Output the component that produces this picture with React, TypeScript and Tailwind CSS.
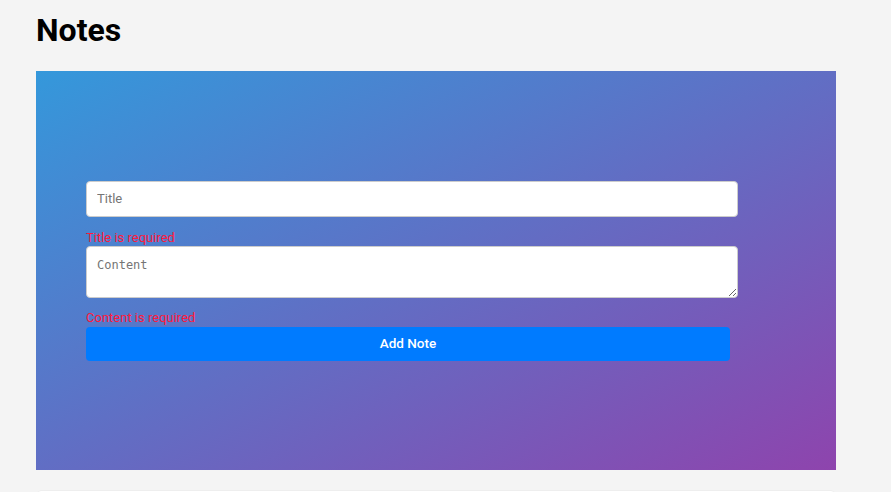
export default function App() {
    return (
        <div className="h-screen overflow-hidden bg-[#f4f4f4] px-[36px] font-['Roboto',sans-serif]">
            {/* heading */}
            <h1 className="pt-[11px] mb-[22px] text-[32px] leading-[38px] font-bold text-black">Notes</h1>

            {/* form panel */}
            <div className="w-[800px] h-[399px] bg-linear-to-br/srgb from-[#3498db] to-[#8e44ad] flex flex-col justify-center px-[50px]">
                <form className="flex flex-col" onSubmit={(e) => e.preventDefault()}>
                    <input
                        type="text"
                        placeholder="Title"
                        className="block w-[652px] h-[36px] px-[10px] rounded-[4px] border border-[#ccc] bg-white text-[13px] text-[#333] placeholder:text-[#757575] outline-none"
                    />
                    <p className="mt-[13px] h-4 text-[13px] leading-4 text-[#ff1a3c]">Title is required</p>
                    <textarea
                        placeholder="Content"
                        className="block w-[652px] h-[52px] px-[10px] pt-[11px] pb-[8px] rounded-[4px] border border-[#ccc] bg-white font-['DejaVu_Sans_Mono',monospace] text-[12px] leading-[15px] text-[#333] placeholder:text-[#757575] outline-none resize-y"
                    />
                    <p className="mt-[12px] h-4 text-[13px] leading-4 text-[#ff1a3c]">Content is required</p>
                    <button
                        type="submit"
                        className="mt-px w-[644px] h-[34px] rounded-[4px] bg-[#007bff] text-white text-[13.5px] font-medium"
                    >
                        Add Note
                    </button>
                </form>
            </div>

            {/* notes list card */}
            <div className="mt-[20px] ml-px w-[798px] h-[40px] rounded-[4px] border border-[#eee] bg-white" />
        </div>
    )
}
